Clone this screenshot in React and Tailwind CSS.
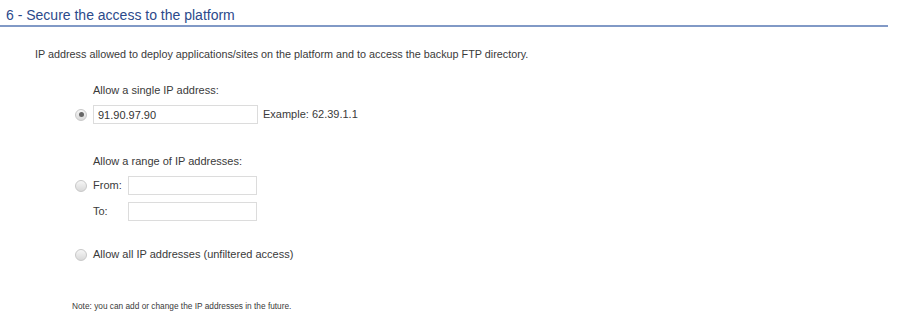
import { useState } from "react";

const Radio = ({ checked, onClick }) => (
  <button
    type="button"
    onClick={onClick}
    className="w-[12px] h-[12px] rounded-full border border-[#c8c8c8] bg-gradient-to-b from-[#f6f6f6] to-[#d9d9d9] flex items-center justify-center shrink-0"
  >
    {checked && <span className="w-[5px] h-[5px] rounded-full bg-[#666]"></span>}
  </button>
);

const Field = ({ value, onChange, width }) => (
  <input
    type="text"
    value={value}
    onChange={(e) => onChange(e.target.value)}
    className={`${width} h-[19px] border border-[#dcdcdc] bg-white px-[4px] text-[11px] text-[#333] outline-none`}
  />
);

const App = () => {
  const [mode, setMode] = useState("single");
  const [ip, setIp] = useState("91.90.97.90");
  const [from, setFrom] = useState("");
  const [to, setTo] = useState("");

  return (
    <div className="w-[900px] h-[323px] bg-white text-[#3a3a3a] font-['Liberation_Sans',Arial,sans-serif]">
      {/* Section title */}
      <div className="w-[888px] pl-[6px] pt-[7px] pb-[1px] border-b-2 border-[#8199c6]">
        <h2 className="text-[14px] leading-[17px] text-[#2c4a8b]">
          6 - Secure the access to the platform
        </h2>
      </div>

      <p className="ml-[35px] mt-[21px] text-[10.8px] leading-[13px]">
        IP address allowed to deploy applications/sites on the platform and to access the backup FTP directory.
      </p>

      <div className="pl-[75px] text-[11px] leading-[13px]">
        {/* single */}
        <p className="pl-[18px] mt-[23px]">Allow a single IP address:</p>
        <div className="flex items-center mt-[8px]">
          <Radio checked={mode === "single"} onClick={() => setMode("single")} />
          <div className="ml-[6px]">
            <Field value={ip} onChange={setIp} width="w-[165px]" />
          </div>
          <span className="ml-[5px]">Example: 62.39.1.1</span>
        </div>

        {/* range */}
        <p className="pl-[18px] mt-[31px]">Allow a range of IP addresses:</p>
        <div className="flex items-start mt-[8px]">
          <div className="h-[19px] flex items-center">
            <Radio checked={mode === "range"} onClick={() => setMode("range")} />
          </div>
          <div className="ml-[6px] flex flex-col gap-[7px]">
            <div className="flex items-center">
              <span className="w-[35px]">From:</span>
              <Field value={from} onChange={setFrom} width="w-[129px]" />
            </div>
            <div className="flex items-center">
              <span className="w-[35px]">To:</span>
              <Field value={to} onChange={setTo} width="w-[129px]" />
            </div>
          </div>
        </div>

        {/* all */}
        <div className="flex items-center mt-[27px]">
          <Radio checked={mode === "all"} onClick={() => setMode("all")} />
          <span className="ml-[6px]">Allow all IP addresses (unfiltered access)</span>
        </div>
      </div>

      <p className="ml-[72px] mt-[40px] text-[8.3px] leading-[10px]">
        Note: you can add or change the IP addresses in the future.
      </p>
    </div>
  );
};

export default App;
